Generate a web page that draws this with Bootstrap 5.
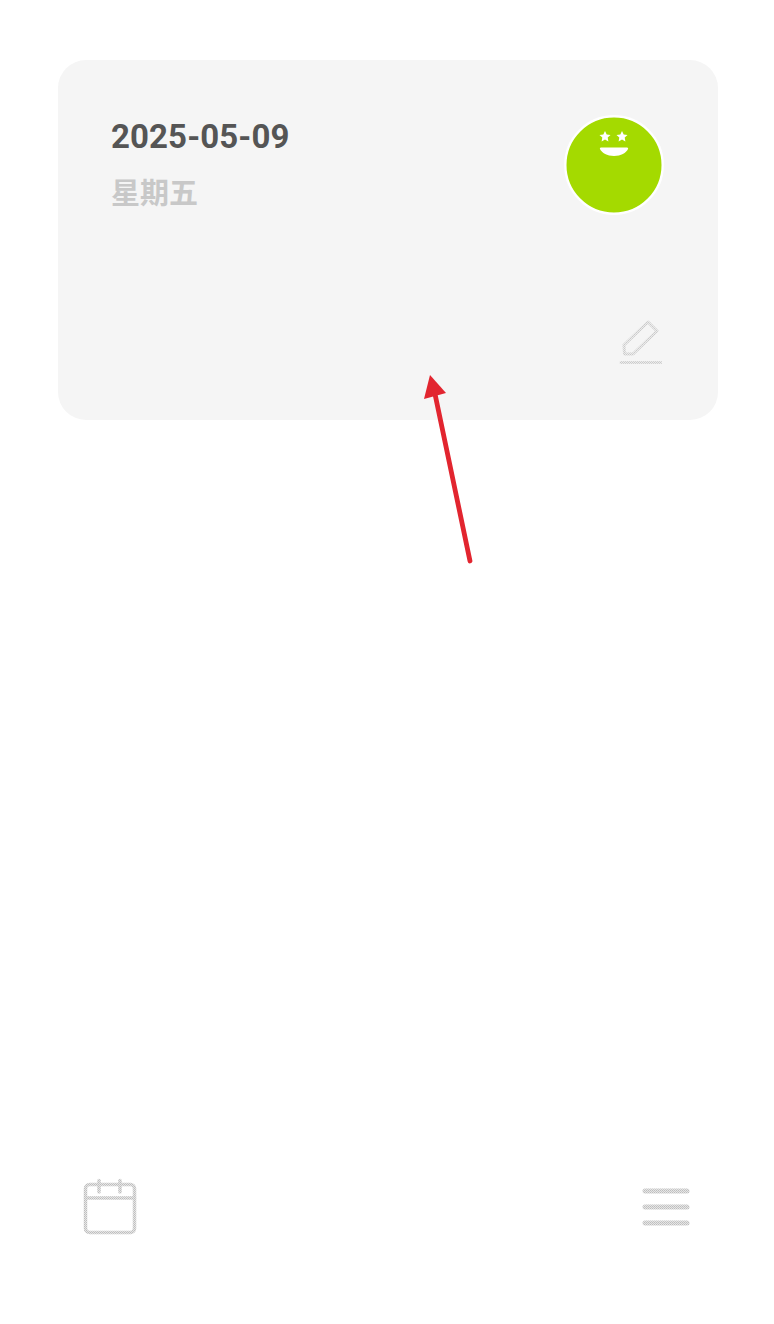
<!DOCTYPE html>
<html lang="zh">
<head>
  <meta charset="UTF-8">
  <meta name="viewport" content="width=device-width, initial-scale=1.0">
  <title>日记</title>
  <link href="https://cdn.jsdelivr.net/npm/bootstrap@5.3.0/dist/css/bootstrap.min.css" rel="stylesheet">
  <style>
    body { background: #fff; }
    .app-screen { height: 1324px; position: relative; overflow: hidden; }
    .day-card {
      margin: 60px 56px 0 58px;
      height: 360px;
      padding: 56px 56px 56px 53px;
      background: #f5f5f5;
      border-radius: 28px;
    }
    .day-date {
      font-family: Roboto, "Liberation Sans", sans-serif;
      font-weight: 700;
      font-size: 33px;
      line-height: 42px;
      letter-spacing: .1px;
      color: #555;
    }
    .day-week {
      font-family: "Noto Sans CJK SC", sans-serif;
      font-weight: 700;
      font-size: 29px;
      line-height: 40px;
      margin-top: 13px;
      color: #c8c8c8;
    }
    .mood-face { width: 100px; height: 100px; margin-right: -2px; margin-top: -1px; }
    .edit-icon { width: 44px; height: 44px; }
    .bottom-bar { padding: 0 84px 88px 82px; }
    .cal-icon { width: 56px; height: 58px; }
    .menu-icon { width: 48px; height: 38px; }
    .note-arrow { position: absolute; left: 420px; top: 370px; width: 60px; height: 200px; }
    .svg-defs { width: 0; height: 0; }
  </style>
</head>
<body>
  <svg class="position-absolute svg-defs">
    <defs>
      <pattern id="stipple" width="2" height="2" patternUnits="userSpaceOnUse">
        <rect width="2" height="2" fill="#e6e6e6"/>
        <rect width="1" height="1" fill="#bdbdbd"/>
        <rect x="1" y="1" width="1" height="1" fill="#c6c6c6"/>
      </pattern>
      <pattern id="stipple-light" width="2" height="2" patternUnits="userSpaceOnUse">
        <rect width="2" height="2" fill="#ececec"/>
        <rect width="1" height="1" fill="#cacaca"/>
        <rect x="1" y="1" width="1" height="1" fill="#d2d2d2"/>
      </pattern>
    </defs>
  </svg>
  <div class="app-screen d-flex flex-column">
    <div class="day-card d-flex flex-column justify-content-between">
      <div class="d-flex justify-content-between align-items-start">
        <div>
          <div class="day-date">2025-05-09</div>
          <div class="day-week">星期五</div>
        </div>
        <svg class="mood-face" viewBox="0 0 100 100">
          <circle cx="50" cy="50" r="48.700" fill="#a4da00" stroke="#fff" stroke-width="2.400"/>
          <polygon fill="#fff" points="41,16 42.700,19.500 46.500,20 43.700,22.600 44.400,26.400 41,24.500 37.600,26.400 38.300,22.600 35.500,20 39.300,19.500"/>
          <polygon fill="#fff" points="58,16 59.700,19.500 63.500,20 60.700,22.600 61.400,26.400 58,24.500 54.600,26.400 55.300,22.600 52.500,20 56.300,19.500"/>
          <path fill="#fff" d="M37 32.500h26c1 0 1.300.8 1 1.600-2 4-7 6.900-14 6.900s-12-2.900-14-6.900c-.3-.8 0-1.600 1-1.600z"/>
        </svg>
      </div>
      <div class="d-flex justify-content-end">
        <svg class="edit-icon" viewBox="0 0 44 44" fill="none" stroke="url(#stipple-light)" stroke-width="3" stroke-linecap="round">
          <path d="M30 2 39 11 15 34H6.500L6 25Z" stroke-linejoin="round"/>
          <path d="M3 42.500H43"/>
        </svg>
      </div>
    </div>

    <div class="bottom-bar mt-auto d-flex justify-content-between align-items-center">
      <svg class="cal-icon" viewBox="0 0 56 58" fill="none" stroke="url(#stipple)" stroke-width="3.500" stroke-linecap="round">
        <rect x="3.500" y="6.500" width="49" height="48" rx="4"/>
        <path d="M3.500 20H52.500"/>
        <path d="M17 2.500V14"/>
        <path d="M38 2.500V14"/>
      </svg>
      <svg class="menu-icon" viewBox="0 0 48 38" fill="none" stroke="url(#stipple)" stroke-width="5" stroke-linecap="round">
        <path d="M3 3H45"/>
        <path d="M3 19H45"/>
        <path d="M3 35H45"/>
      </svg>
    </div>

    <svg class="note-arrow" viewBox="0 0 60 200">
      <path d="M50 191 15 24" stroke="#e2252f" stroke-width="4.800" stroke-linecap="round"/>
      <polygon fill="#e2252f" points="10,5 26,23 4,29"/>
    </svg>
  </div>
  <script src="https://cdn.jsdelivr.net/npm/bootstrap@5.3.0/dist/js/bootstrap.bundle.min.js"></script>
</body>
</html>
